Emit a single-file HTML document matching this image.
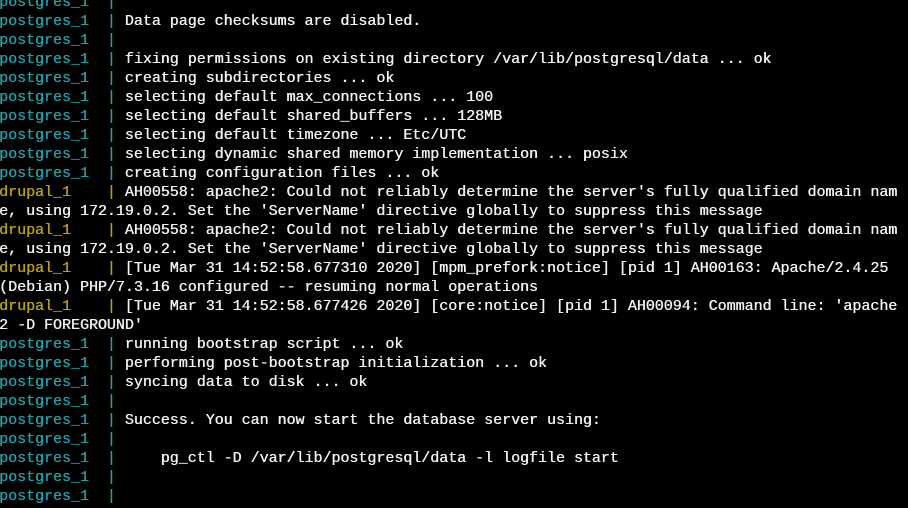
<!DOCTYPE html><html><head><style>
html,body{margin:0;background:#000;width:908px;height:508px;overflow:hidden}
pre{margin:0;position:absolute;top:-7px;left:-1px;font-family:"Liberation Mono",monospace;font-size:15px;line-height:19px;color:#f2f2f2;letter-spacing:-0.02px;text-shadow:0.4px 0 0 currentColor}
.p{color:#1fa0a8}.d{color:#b9a208}
</style></head><body><pre><span class="p">postgres_1  |</span> 
<span class="p">postgres_1  |</span> Data page checksums are disabled.
<span class="p">postgres_1  |</span>
<span class="p">postgres_1  |</span> fixing permissions on existing directory /var/lib/postgresql/data ... ok
<span class="p">postgres_1  |</span> creating subdirectories ... ok
<span class="p">postgres_1  |</span> selecting default max_connections ... 100
<span class="p">postgres_1  |</span> selecting default shared_buffers ... 128MB
<span class="p">postgres_1  |</span> selecting default timezone ... Etc/UTC
<span class="p">postgres_1  |</span> selecting dynamic shared memory implementation ... posix
<span class="p">postgres_1  |</span> creating configuration files ... ok
<span class="d">drupal_1    |</span> AH00558: apache2: Could not reliably determine the server's fully qualified domain nam
e, using 172.19.0.2. Set the 'ServerName' directive globally to suppress this message
<span class="d">drupal_1    |</span> AH00558: apache2: Could not reliably determine the server's fully qualified domain nam
e, using 172.19.0.2. Set the 'ServerName' directive globally to suppress this message
<span class="d">drupal_1    |</span> [Tue Mar 31 14:52:58.677310 2020] [mpm_prefork:notice] [pid 1] AH00163: Apache/2.4.25
(Debian) PHP/7.3.16 configured -- resuming normal operations
<span class="d">drupal_1    |</span> [Tue Mar 31 14:52:58.677426 2020] [core:notice] [pid 1] AH00094: Command line: 'apache
2 -D FOREGROUND'
<span class="p">postgres_1  |</span> running bootstrap script ... ok
<span class="p">postgres_1  |</span> performing post-bootstrap initialization ... ok
<span class="p">postgres_1  |</span> syncing data to disk ... ok
<span class="p">postgres_1  |</span>
<span class="p">postgres_1  |</span> Success. You can now start the database server using:
<span class="p">postgres_1  |</span>
<span class="p">postgres_1  |</span>     pg_ctl -D /var/lib/postgresql/data -l logfile start
<span class="p">postgres_1  |</span>
<span class="p">postgres_1  |</span></pre></body></html>
